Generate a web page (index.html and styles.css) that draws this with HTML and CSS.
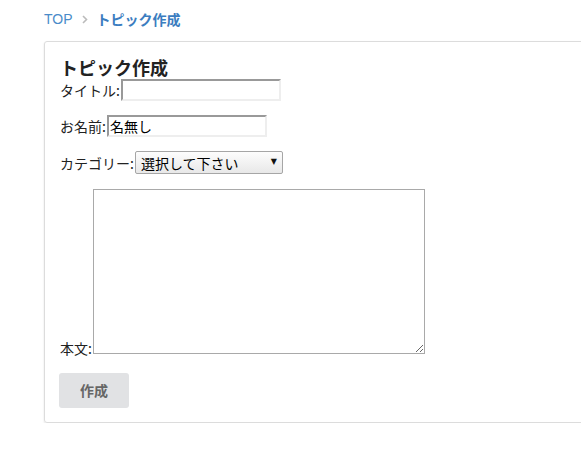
FILE: index.html
```html
<!DOCTYPE html>
<html lang="ja">
<head>
<meta charset="utf-8">
<title>トピック作成</title>
<link rel="stylesheet" href="styles.css">
</head>
<body>
<div class="page">
  <nav class="crumbs">
    <a class="crumb-link" href="#">TOP</a>
    <span class="crumb-sep">
      <svg width="6" height="9" viewBox="0 0 6 9"><path d="M1 1 L4.5 4.5 L1 8" fill="none" stroke="#bbb" stroke-width="1.6"/></svg>
    </span>
    <span class="crumb-current">トピック作成</span>
  </nav>
  <section class="card">
    <h1 class="card-title">トピック作成</h1>
    <form class="form">
      <div class="row"><label class="lbl">タイトル:</label><input class="field" type="text"></div>
      <div class="row"><label class="lbl">お名前:</label><input class="field" type="text" value="名無し"></div>
      <div class="row row-select"><label class="lbl">カテゴリー:</label><span class="select-wrap"><select class="select"><option>選択して下さい</option></select><span class="select-arrow">▼</span></span></div>
      <div class="row row-text"><label class="lbl">本文:</label><textarea class="area"></textarea></div>
      <div class="actions"><button class="btn" type="button">作成</button></div>
    </form>
  </section>
</div>
</body>
</html>
```
FILE: styles.css
```css
html, body {
  margin: 0;
  padding: 0;
  overflow: hidden;
  background: #fff;
}
body {
  font-family: "Liberation Sans", Arial, "Noto Sans CJK JP", sans-serif;
  color: #222;
  font-size: 14px;
}
.page {
  padding: 10px 0 0 44px;
}
.crumbs {
  display: flex;
  align-items: center;
  height: 18px;
  line-height: 18px;
}
.crumb-link {
  color: #4a8bc9;
  text-decoration: none;
  font-size: 14px;
}
.crumb-sep {
  display: inline-flex;
  margin: 0 9px;
}
.crumb-current {
  color: #3b7dc0;
  font-weight: bold;
  font-family: "Noto Sans CJK JP", sans-serif;
  font-size: 14px;
}
.card {
  margin-top: 13px;
  width: 600px;
  border: 1px solid #dcdcdc;
  border-radius: 3px;
  box-shadow: 0 1px 2px rgba(0,0,0,0.12);
  padding: 15px 15px 14px 15px;
}
.card-title {
  margin: 0;
  font-size: 18px;
  line-height: 21px;
  font-weight: bold;
  font-family: "Noto Sans CJK JP", sans-serif;
  color: #222;
  padding-bottom: 1px;
}
.form {
  margin: 0;
}
.row {
  line-height: 22px;
  margin-bottom: 13px;
}
.row-select {
  margin-bottom: 14px;
}
.lbl {
  font-family: "Noto Sans CJK JP", sans-serif;
  font-size: 14px;
  color: #222;
}
.field {
  box-sizing: border-box;
  width: 160px;
  height: 22px;
  margin: 0 0 0 1px;
  border-style: solid;
  border-width: 2px;
  border-color: #999 #eee #eee #999;
  padding: 0 1px;
  font-family: "Noto Sans CJK JP", sans-serif;
  font-size: 14px;
  color: #000;
  vertical-align: baseline;
  outline: none;
}
.select-wrap {
  position: relative;
  display: inline-block;
  margin-left: 1px;
}
.select {
  -webkit-appearance: none;
  appearance: none;
  box-sizing: border-box;
  width: 148px;
  height: 23px;
  margin: 0;
  border: 1px solid #a6a6a6;
  border-radius: 2px;
  background: linear-gradient(#fdfdfd, #e8e8e8);
  padding: 0 0 0 5px;
  font-family: "Noto Sans CJK JP", sans-serif;
  font-size: 14px;
  color: #000;
}
.select-arrow {
  position: absolute;
  right: 6px;
  top: 6px;
  font-family: "DejaVu Sans", sans-serif;
  font-size: 8px;
  line-height: 10px;
  color: #111;
  pointer-events: none;
}
.area {
  box-sizing: border-box;
  width: 332px;
  height: 165px;
  margin: 0 0 0 1px;
  border: 1px solid #a9a9a9;
  vertical-align: baseline;
  padding: 2px;
}
.row-text {
  margin-bottom: 13px;
}
.actions {
  display: flex;
}
.btn {
  width: 70px;
  height: 35px;
  border: none;
  border-radius: 3px;
  background: #e1e2e4;
  color: #666;
  font-weight: bold;
  font-size: 14px;
  font-family: "Noto Sans CJK JP", sans-serif;
  margin-left: -1px;
}
```
